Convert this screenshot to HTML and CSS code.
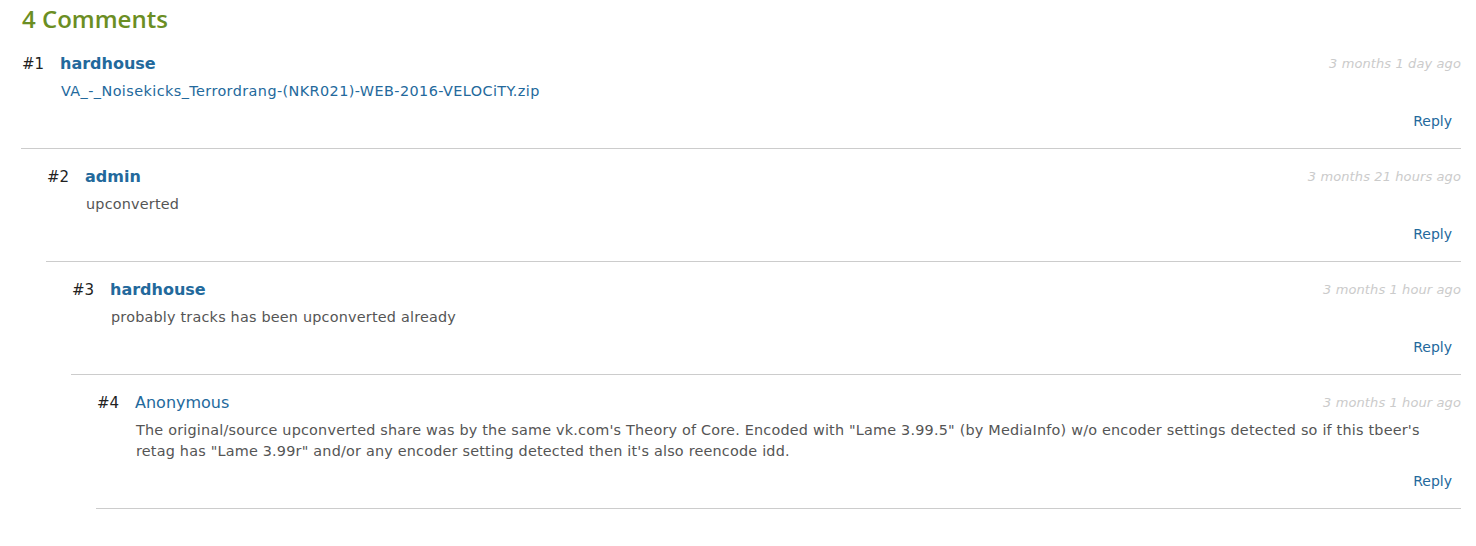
FILE: index.html
```html
<!DOCTYPE html>
<html lang="en">
<head>
<meta charset="utf-8">
<title>Comments</title>
<link rel="stylesheet" href="styles.css">
</head>
<body>
<section class="comments">
  <h2 class="comments-title">4 Comments</h2>
  <ol class="comment-list">
    <li class="comment">
      <div class="comment-box">
        <div class="comment-head">
          <span class="comment-num">#1</span>
          <a class="comment-author" href="#">hardhouse</a>
          <span class="comment-time">3 months 1 day ago</span>
        </div>
        <div class="comment-body"><a class="comment-link" href="#">VA_-_Noisekicks_Terrordrang-(NKR021)-WEB-2016-VELOCiTY.zip</a></div>
        <div class="comment-actions"><a class="reply" href="#">Reply</a></div>
      </div>
      <ol class="children">
        <li class="comment">
          <div class="comment-box">
            <div class="comment-head">
              <span class="comment-num">#2</span>
              <a class="comment-author" href="#">admin</a>
              <span class="comment-time">3 months 21 hours ago</span>
            </div>
            <div class="comment-body">upconverted</div>
            <div class="comment-actions"><a class="reply" href="#">Reply</a></div>
          </div>
          <ol class="children">
            <li class="comment">
              <div class="comment-box">
                <div class="comment-head">
                  <span class="comment-num">#3</span>
                  <a class="comment-author" href="#">hardhouse</a>
                  <span class="comment-time">3 months 1 hour ago</span>
                </div>
                <div class="comment-body">probably tracks has been upconverted already</div>
                <div class="comment-actions"><a class="reply" href="#">Reply</a></div>
              </div>
              <ol class="children">
                <li class="comment">
                  <div class="comment-box">
                    <div class="comment-head">
                      <span class="comment-num">#4</span>
                      <span class="comment-author anon">Anonymous</span>
                      <span class="comment-time">3 months 1 hour ago</span>
                    </div>
                    <div class="comment-body">The original/source upconverted share was by the same vk.com's Theory of Core. Encoded with "Lame 3.99.5" (by MediaInfo) w/o encoder settings detected so if this tbeer's retag has "Lame 3.99r" and/or any encoder setting detected then it's also reencode idd.</div>
                    <div class="comment-actions"><a class="reply" href="#">Reply</a></div>
                  </div>
                </li>
              </ol>
            </li>
          </ol>
        </li>
      </ol>
    </li>
  </ol>
</section>
</body>
</html>
```
FILE: styles.css
```css
html, body {
  margin: 0;
  padding: 0;
  background: #ffffff;
}
body {
  font-family: "DejaVu Sans", Verdana, sans-serif;
  color: #555555;
}
.comments {
  padding: 0 15px 0 21px;
}
.comments-title {
  margin: 4px 0 2px 1px;
  font-family: "Open Sans", sans-serif;
  font-weight: 600;
  font-size: 24px;
  line-height: 30px;
  color: #6b8e23;
}
.comment-list,
.children {
  list-style: none;
  margin: 0;
  padding: 0;
}
.children {
  padding-left: 25px;
}
.comment-box {
  padding: 15px 0 17px 0;
  border-bottom: 1px solid #cccccc;
}
.comment-head {
  display: flex;
  align-items: center;
  height: 24px;
}
.comment-num {
  width: 39px;
  padding-left: 1px;
  padding-top: 2px;
  box-sizing: border-box;
  font-size: 15px;
  color: #222222;
}
.comment-author {
  font-size: 16px;
  font-weight: bold;
  color: #23699c;
  text-decoration: none;
}
.comment-author.anon {
  font-weight: normal;
}
.comment-time {
  margin-left: auto;
  font-size: 13px;
  letter-spacing: 0.1px;
  font-style: italic;
  color: #cbcbcb;
}
.comment-body {
  margin-top: 6px;
  padding-left: 40px;
  font-size: 14.4px;
  letter-spacing: 0.2px;
  line-height: 21px;
  color: #555555;
}
.comment-link {
  color: #23699c;
  text-decoration: none;
  letter-spacing: 0.42px;
}
.comment-actions {
  margin-top: 9px;
  padding-right: 9px;
  text-align: right;
  line-height: 20px;
}
.reply {
  font-size: 14px;
  color: #23699c;
  text-decoration: none;
}
```
